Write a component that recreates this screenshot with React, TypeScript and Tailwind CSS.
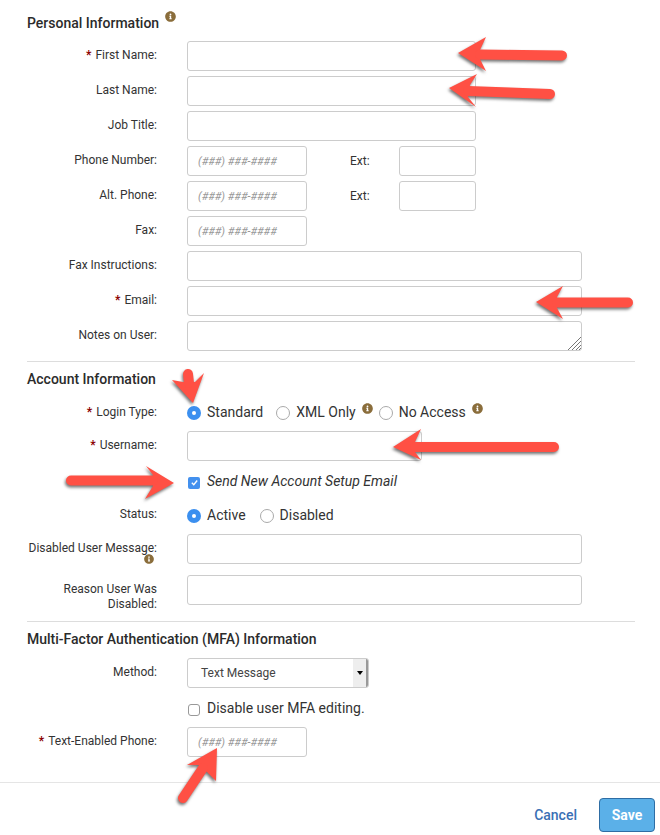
import type { ReactNode } from 'react';
import { FaInfoCircle } from 'react-icons/fa';

const inputClass =
  'h-[30px] rounded-[3px] border border-[#ccc] bg-white px-[10px] text-[12px] outline-none placeholder:text-[11px] placeholder:italic placeholder:text-[#999]';

function Info({ size = 11, className = '' }: { size?: number; className?: string }) {
  return <FaInfoCircle size={size} className={`text-[#8a6d3b] ${className}`} />;
}

function Row({
  label,
  required,
  children,
  className = 'mb-[5px]',
  labelClass = 'pt-[7px]',
}: {
  label: ReactNode;
  required?: boolean;
  children: ReactNode;
  className?: string;
  labelClass?: string;
}) {
  return (
    <div className={`flex items-start ${className}`}>
      <label className={`w-[130px] shrink-0 text-right text-[12px] leading-[15px] text-[#333] ${labelClass}`}>
        {required && <span className="mr-[4px] font-bold text-[#8b0000]">*</span>}
        {label}
      </label>
      <div className="ml-[30px] flex min-w-0 items-center">{children}</div>
    </div>
  );
}

function Radio({ checked, label, info }: { checked?: boolean; label: string; info?: boolean }) {
  return (
    <span className="flex items-center">
      {checked ? (
        <span className="mt-[2px] flex h-[14px] w-[14px] items-center justify-center rounded-full bg-[#3b8fef]">
          <span className="h-[4px] w-[4px] rounded-full bg-white" />
        </span>
      ) : (
        <span className="mt-[2px] h-[14px] w-[14px] rounded-full border border-[#aaa] bg-white" />
      )}
      <span className="ml-[6px] text-[14px] leading-[20px] text-[#333]">{label}</span>
      {info && <Info className="mb-[8px] ml-[6px]" />}
    </span>
  );
}

// red annotation arrows drawn on top of the form
function Arrows() {
  const arrows = [
    { head: '458,53 486,37 480,50 480,59 486,71', shaft: 'M480 54.5 L562 55.5' },
    { head: '449,88 477,74 470,85 468,97 476,107', shaft: 'M468 91 L550 94' },
    { head: '536,302 563,286 557,297 557,308 563,319', shaft: 'M557 302.5 L628 302.5' },
    { head: '393,447 421,429 415,442 415,452 421,460', shaft: 'M415 447 L554 447' },
    { head: '193,403 172,380 183,382 195,382 204,373', shaft: 'M189 383 L188 374' },
    { head: '174,483 146,466 153,475 153,486 145,499', shaft: 'M153 480.5 L71 480.5' },
    { head: '217,748 187,765 200,765 207,772 216,781', shaft: 'M203 768 L183 798' },
  ];
  return (
    <svg
      viewBox="0 0 660 835"
      className="pointer-events-none absolute inset-0 h-[835px] w-[660px] drop-shadow-[-1px_2px_1.5px_rgba(0,0,0,0.55)]"
    >
      {arrows.map((a, i) => (
        <g key={i}>
          <polygon points={a.head} fill="#ff5044" />
          <path d={a.shaft} stroke="#ff5044" strokeWidth={10} strokeLinecap="round" fill="none" />
        </g>
      ))}
    </svg>
  );
}

export default function App() {
  return (
    <div className="relative h-[835px] w-[660px] overflow-hidden bg-white font-['Roboto',sans-serif] text-[#333]">
      <div className="pl-[27px] pr-[25px] pt-[14px]">
        <h3 className="flex h-[18px] items-start text-[14px] font-medium leading-[18px] text-[#2b2b2b]">
          Personal Information
          <Info className="ml-[6px] mt-[-3px]" />
        </h3>
        <div className="mt-[9px]">
          <Row label="First Name:" required>
            <input className={`${inputClass} w-[289px]`} />
          </Row>
          <Row label="Last Name:">
            <input className={`${inputClass} w-[289px]`} />
          </Row>
          <Row label="Job Title:">
            <input className={`${inputClass} w-[289px]`} />
          </Row>
          <Row label="Phone Number:">
            <input className={`${inputClass} w-[120px]`} placeholder="(###) ###-####" />
            <span className="ml-[43px] w-[49px] text-[12px]">Ext:</span>
            <input className={`${inputClass} w-[77px]`} />
          </Row>
          <Row label="Alt. Phone:">
            <input className={`${inputClass} w-[120px]`} placeholder="(###) ###-####" />
            <span className="ml-[43px] w-[49px] text-[12px]">Ext:</span>
            <input className={`${inputClass} w-[77px]`} />
          </Row>
          <Row label="Fax:">
            <input className={`${inputClass} w-[120px]`} placeholder="(###) ###-####" />
          </Row>
          <Row label="Fax Instructions:">
            <input className={`${inputClass} w-[395px]`} />
          </Row>
          <Row label="Email:" required>
            <input className={`${inputClass} w-[395px]`} />
          </Row>
          <Row label="Notes on User:" className="">
            <div className="relative h-[30px] w-[395px]">
              <textarea className={`${inputClass} block w-full resize-none`} />
              <svg viewBox="0 0 13 13" className="absolute bottom-[1px] right-[1px] h-[13px] w-[13px]">
                <path d="M13 0 L0 13 M13 4 L4 13 M13 8 L8 13 M13 11 L11 13" stroke="#777" strokeWidth={1} fill="none" />
              </svg>
            </div>
          </Row>
        </div>

        <hr className="mt-[10px] border-[#ddd]" />
        <h3 className="mt-[8px] text-[14px] font-medium leading-[18px] text-[#2b2b2b]">Account Information</h3>

        <Row label="Login Type:" required className="mb-[9px] mt-[14px] h-[20px]" labelClass="pt-[3px]">
          <Radio checked label="Standard" />
          <span className="ml-[13px]">
            <Radio label="XML Only" info />
          </span>
          <span className="ml-[6px]">
            <Radio label="No Access" info />
          </span>
        </Row>
        <Row label="Username:" required>
          <input className={`${inputClass} w-[235px]`} />
        </Row>
        <div className="ml-[161px] flex h-[30px] items-center">
          <span className="mt-[3px] flex h-[12px] w-[12px] items-center justify-center rounded-[2px] bg-[#4390ee]">
            <svg viewBox="0 0 10 10" className="h-[9px] w-[9px]">
              <path d="M2 5.2 L4.2 7.4 L8 2.8" stroke="#fff" strokeWidth={1.5} fill="none" />
            </svg>
          </span>
          <span className="ml-[7px] text-[14px] italic text-[#333]">Send New Account Setup Email</span>
        </div>
        <Row label="Status:" className="mt-[8px] h-[30px]" labelClass="pt-[3px]">
          <div className="mt-[1px] flex items-center">
            <Radio checked label="Active" />
            <span className="ml-[14px]">
              <Radio label="Disabled" />
            </span>
          </div>
        </Row>
        <Row
          label={
            <span className="flex flex-col items-end">
              <span className="whitespace-nowrap">Disabled User Message:</span>
              <Info size={10} className="mr-[3px] mt-[-2px]" />
            </span>
          }
          className="mb-[11px]"
        >
          <input className={`${inputClass} w-[395px]`} />
        </Row>
        <Row label="Reason User Was Disabled:" className="">
          <input className={`${inputClass} w-[395px]`} />
        </Row>

        <hr className="mt-[9px] border-[#ddd]" />
        <h3 className="mt-[8px] text-[14px] font-medium leading-[18px] text-[#2b2b2b]">
          Multi-Factor Authentication (MFA) Information
        </h3>

        <div className="mt-[10px]">
          <Row label="Method:">
            <div className="flex h-[30px] w-[182px] items-stretch overflow-hidden rounded-[3px] border border-[#ccc] bg-white text-[12px]">
              <span className="flex-1 self-center pl-[13px] text-[#444]">Text Message</span>
              <span className="flex w-[15px] items-center justify-center border-r-2 border-[#999] bg-[#eee]">
                <span className="h-0 w-0 border-x-[3px] border-t-[4px] border-x-transparent border-t-black" />
              </span>
            </div>
          </Row>
        </div>
        <div className="ml-[161px] flex h-[30px] items-center">
          <span className="mt-[3px] h-[12px] w-[12px] rounded-[3px] border border-[#999] bg-white" />
          <span className="ml-[7px] text-[14px] text-[#333]">Disable user MFA editing.</span>
        </div>
        <Row label="Text-Enabled Phone:" required className="mt-[4px]">
          <input className={`${inputClass} w-[120px]`} placeholder="(###) ###-####" />
        </Row>
      </div>

      <div className="mt-[25px] flex items-center justify-end border-t border-[#e5e5e5] px-[5px] pt-[15px]">
        <a className="mr-[22px] text-[14px] font-medium text-[#3a70b5]">Cancel</a>
        <button className="h-[34px] w-[56px] rounded-[4px] border border-[#2e6da4] bg-[#5bb0e8] text-[14px] font-bold text-white">
          Save
        </button>
      </div>

      <Arrows />
    </div>
  );
}
